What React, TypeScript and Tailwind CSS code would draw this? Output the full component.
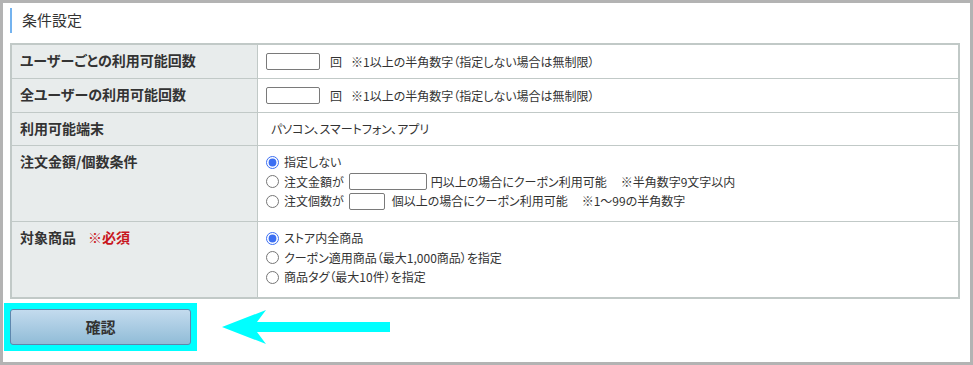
const jp = "font-['Noto_Sans_CJK_JP','Noto_Sans',sans-serif]";

function Label({ children }: { children: React.ReactNode }) {
  return (
    <div className="w-[246px] shrink-0 bg-[#e8ecec] border-r border-[#c1c9c7] pl-[8px] text-[14px] font-bold text-[#333] leading-[20px]">
      {children}
    </div>
  );
}

function Radio({ checked }: { checked?: boolean }) {
  return (
    <input
      type="radio"
      defaultChecked={checked}
      className="m-0 mr-[5px] w-[13px] h-[13px] accent-[#3c6ff2]"
    />
  );
}

function TextBox({ w }: { w: string }) {
  return (
    <span
      className={`inline-block h-[17px] ${w} border border-[#7a7a7a] rounded-[2px] bg-white`}
    />
  );
}

export default function App() {
  return (
    <div
      className={`relative w-[973px] h-[365px] bg-white border-[3px] border-[#b3b3b3] ${jp} text-[#333] [font-feature-settings:'palt']`}
    >
      {/* heading */}
      <div className="ml-[7px] mt-[5px] h-[25px] border-l-2 border-[#74b3ef] pl-[10px] flex items-center text-[15px]">
        条件設定
      </div>

      {/* conditions table */}
      <div className="ml-[7px] mt-[10px] w-[950px] border-2 border-[#c1c9c7]">
        <div className="flex h-[33px]">
          <Label>
            <div className="pt-[5px]">ユーザーごとの利用可能回数</div>
          </Label>
          <div className="flex items-center pl-[8px] text-[12px]">
            <TextBox w="w-[54px]" />
            <span className="ml-[10px]">回</span>
            <span className="ml-[9px]">※1以上の半角数字（指定しない場合は無制限）</span>
          </div>
        </div>
        <div className="flex h-[34px] border-t border-[#c1c9c7]">
          <Label>
            <div className="pt-[5px]">全ユーザーの利用可能回数</div>
          </Label>
          <div className="flex items-center pl-[8px] text-[12px]">
            <TextBox w="w-[54px]" />
            <span className="ml-[10px]">回</span>
            <span className="ml-[9px]">※1以上の半角数字（指定しない場合は無制限）</span>
          </div>
        </div>
        <div className="flex h-[33px] border-t border-[#c1c9c7]">
          <Label>
            <div className="pt-[5px]">利用可能端末</div>
          </Label>
          <div className="flex items-center pl-[13px] text-[12px]">
            パソコン、スマートフォン、アプリ
          </div>
        </div>
        <div className="flex h-[76px] border-t border-[#c1c9c7]">
          <Label>
            <div className="pt-[5px]">注文金額/個数条件</div>
          </Label>
          <div className="pl-[8px] pt-[6px] text-[12px] flex flex-col">
            <label className="flex items-center h-[20px]">
              <Radio checked />
              指定しない
            </label>
            <label className="flex items-center h-[19px]">
              <Radio />
              注文金額が
              <span className="ml-[5px] mr-[4px] flex">
                <TextBox w="w-[78px]" />
              </span>
              円以上の場合にクーポン利用可能
              <span className="ml-[14px]">※半角数字9文字以内</span>
            </label>
            <label className="flex items-center h-[20px]">
              <Radio />
              注文個数が
              <span className="ml-[5px] mr-[7px] flex">
                <TextBox w="w-[36px]" />
              </span>
              個以上の場合にクーポン利用可能
              <span className="ml-[14px]">※1～99の半角数字</span>
            </label>
          </div>
        </div>
        <div className="flex h-[76px] border-t border-[#c1c9c7]">
          <Label>
            <div className="pt-[5px]">
              対象商品
              <span className="ml-[12px] text-[#c8161d]">※必須</span>
            </div>
          </Label>
          <div className="pl-[8px] pt-[6px] text-[12px] flex flex-col">
            <label className="flex items-center h-[20px]">
              <Radio checked />
              ストア内全商品
            </label>
            <label className="flex items-center h-[19px]">
              <Radio />
              クーポン適用商品（最大1,000商品）を指定
            </label>
            <label className="flex items-center h-[20px]">
              <Radio />
              商品タグ（最大10件）を指定
            </label>
          </div>
        </div>
      </div>

      {/* confirm button, highlighted */}
      <div className="ml-[1px] mt-[4px] w-fit p-[6px] bg-[#00ffff]">
        <button className="block w-[181px] h-[36px] rounded-[3px] border border-[#5e87ae] bg-gradient-to-b from-[#c3dbee] to-[#90bcd7] text-[15px] font-bold text-[#333]">
          確認
        </button>
      </div>

      {/* annotation arrow */}
      <svg
        className="absolute left-[219px] top-[307px]"
        width="169"
        height="36"
        viewBox="0 0 169 36"
      >
        <polygon
          points="0,17 44,0 35,12 168,12 168,22 35,22 44,34"
          fill="#00ffff"
        />
      </svg>
    </div>
  );
}
